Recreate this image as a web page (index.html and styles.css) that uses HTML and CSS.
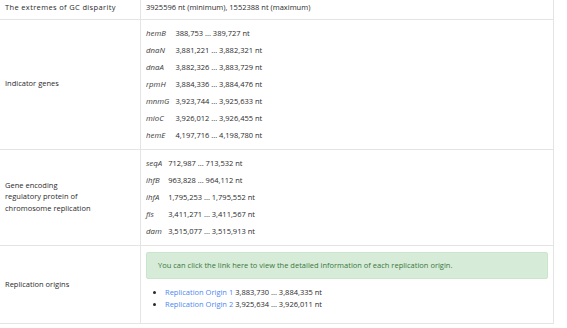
FILE: index.html
```html
<!DOCTYPE html>
<html lang="en">
<head>
    <meta charset="UTF-8">
    <title>Replication information</title>
    <link rel="stylesheet" href="styles.css">
</head>
<body>

    <table class="info">
        <tr class="first">
            <td class="label">The extremes of GC disparity</td>
            <td>3925596 nt (minimum), 1552388 nt (maximum)</td>
        </tr>
        <tr>
            <td class="label">Indicator genes</td>
            <td>
                <div class="genes">
                    <i>hemB</i><span>388,753 ... 389,727 nt</span>
                    <i>dnaN</i><span>3,881,221 ... 3,882,321 nt</span>
                    <i>dnaA</i><span>3,882,326 ... 3,883,729 nt</span>
                    <i>rpmH</i><span>3,884,336 ... 3,884,476 nt</span>
                    <i>mnmG</i><span>3,923,744 ... 3,925,633 nt</span>
                    <i>mioC</i><span>3,926,012 ... 3,926,455 nt</span>
                    <i>hemE</i><span>4,197,716 ... 4,198,780 nt</span>
                </div>
            </td>
        </tr>
        <tr>
            <td class="label">Gene encoding<br>regulatory protein of<br>chromosome replication</td>
            <td>
                <div class="genes">
                    <i>seqA</i><span>712,987 ... 713,532 nt</span>
                    <i>ihfB</i><span>963,828 ... 964,112 nt</span>
                    <i>ihfA</i><span>1,795,253 ... 1,795,552 nt</span>
                    <i>fis</i><span>3,411,271 ... 3,411,567 nt</span>
                    <i>dam</i><span>3,515,077 ... 3,515,913 nt</span>
                </div>
            </td>
        </tr>
        <tr>
            <td class="label">Replication origins</td>
            <td>
                <div class="alert">You can click the link here to view the detailed information of each replication origin.</div>
                <ul class="origins">
                    <li><a href="#">Replication Origin 1</a> 3,883,730 ... 3,884,335 nt</li>
                    <li><a href="#">Replication Origin 2</a> 3,925,634 ... 3,926,011 nt</li>
                </ul>
            </td>
        </tr>
    </table>

</body>
</html>
```

FILE: styles.css
```css
* {
    margin: 0;
    padding: 0;
    box-sizing: border-box;
}

body {
    font-family: 'Open Sans', sans-serif;
    font-size: 7.5px;
    line-height: 11.5px;
    color: #2a2a2a;
    background-color: #fff;
}

.info {
    width: 555px;
    margin: -3px 0 0 -1px;
    border-collapse: collapse;
}

.info td {
    border: 1px solid #e4e4e4;
    padding: 5px;
    vertical-align: middle;
}

.info td.label {
    width: 141px;
}

.info tr.first td {
    padding: 4px 5px 5px;
}

.info tr.first td.label {
    letter-spacing: 0.35px;
}

.genes {
    display: grid;
    grid-template-columns: auto 1fr;
    column-gap: 6px;
    line-height: 17px;
}

.genes i {
    color: #3a3a3a;
    font-size: 7.8px;
}

.alert {
    background-color: #d6ecd8;
    border: 1px solid #cbe5cd;
    border-radius: 2px;
    color: #3c763d;
    padding: 7px 11px;
    margin: 1px 0 8px;
}

.origins {
    padding-left: 19px;
    margin-bottom: 8px;
}

.origins a {
    color: #4d88f0;
    text-decoration: none;
}
```
